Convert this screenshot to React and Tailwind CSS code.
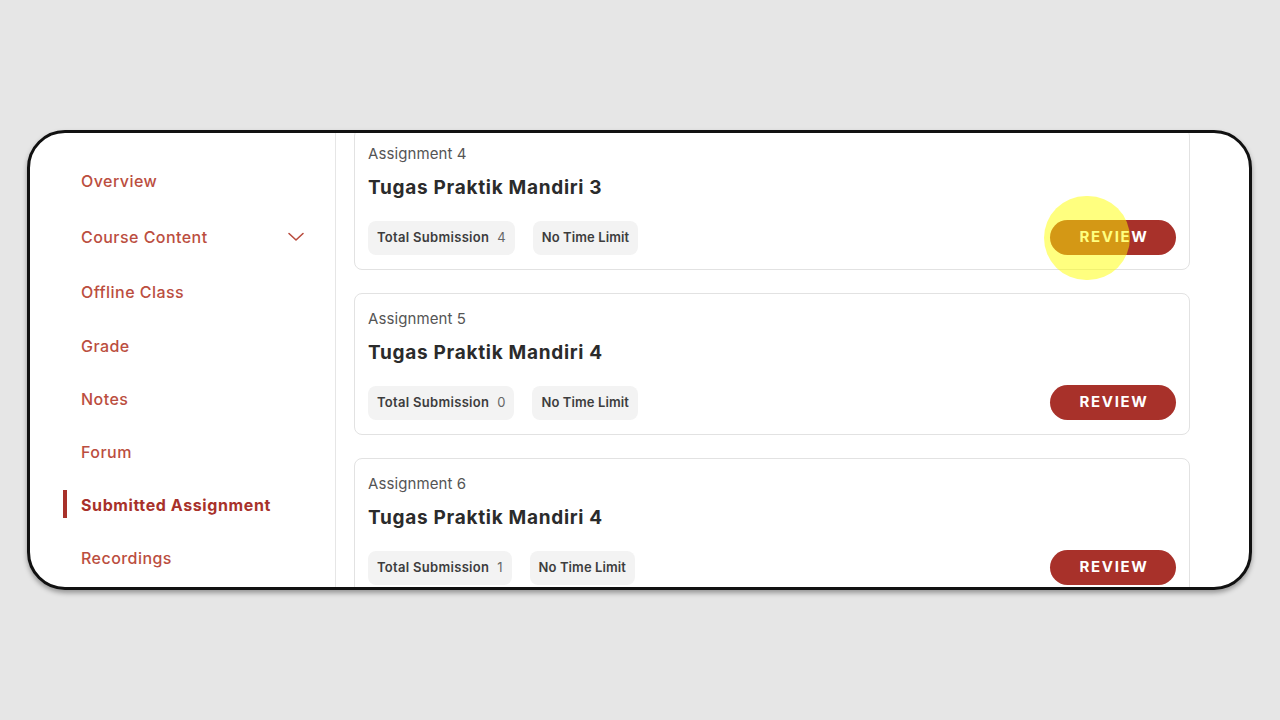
import React from "react";

const font = { fontFamily: "Inter, 'Noto Sans', sans-serif" };

const navItems = [
  { label: "Overview", h: "h-[56px]" },
  { label: "Course Content", h: "h-[56px]", chevron: true },
  { label: "Offline Class", h: "h-[54px]" },
  { label: "Grade", h: "h-[53px]" },
  { label: "Notes", h: "h-[53px]" },
  { label: "Forum", h: "h-[53px]" },
  { label: "Submitted Assignment", h: "h-[53px]", active: true },
  { label: "Recordings", h: "h-[53px]" },
];

const cards = [
  { n: 4, title: "Tugas Praktik Mandiri 3", total: 4, highlight: true },
  { n: 5, title: "Tugas Praktik Mandiri 4", total: 0 },
  { n: 6, title: "Tugas Praktik Mandiri 4", total: 1 },
];

function Card({ n, title, total, highlight }) {
  return (
    <div className="h-[142px] shrink-0 rounded-[8px] border border-[#e2e2e2] bg-white px-[13px] pt-[15px]">
      <div className="text-[15px] leading-[20px] tracking-[0.1px] text-[#555555]">Assignment {n}</div>
      <div className="mt-[10px] text-[19px] font-bold leading-[28px] tracking-[0.7px] text-[#2b2b2b]">
        {title}
      </div>
      <div className="mt-[18px] flex items-center">
        <div className="flex h-[34px] items-center rounded-[8px] bg-[#f3f3f3] px-[9px] text-[13px] text-[#3d3d3d]">
          <span className="font-semibold tracking-[0.3px]">Total Submission</span>
          <span className="ml-[8px] text-[#666666]">{total}</span>
        </div>
        <div className="ml-[18px] flex h-[34px] items-center rounded-[8px] bg-[#f3f3f3] px-[9px] text-[13px] font-semibold tracking-[0.1px] text-[#3d3d3d]">
          No Time Limit
        </div>
        <div className="relative ml-auto">
          <button className="flex h-[35px] w-[126px] items-center justify-center rounded-full bg-[#a8312a] pl-[2px] text-[15px] font-bold tracking-[1.7px] text-white">
            REVIEW
          </button>
          {highlight && (
            <div className="pointer-events-none absolute left-[-6px] top-[-24px] h-[84px] w-[86px] rounded-full bg-[rgba(255,255,0,0.5)]" />
          )}
        </div>
      </div>
    </div>
  );
}

export default function App() {
  return (
    <div className="h-[720px] w-[1280px] bg-[#e6e6e6] pl-[27px] pt-[130px]" style={font}>
      <div className="flex h-[460px] w-[1225px] overflow-hidden rounded-[38px] border-[3px] border-[#111111] bg-white shadow-[0_3px_5px_rgba(0,0,0,0.35)]">
        <div className="w-[306px] shrink-0 border-r border-[#e6e6e6] pt-[20px]">
          {navItems.map((it) => (
            <div key={it.label} className={`relative flex items-center ${it.h} pl-[51px] pr-[30px]`}>
              {it.active && <div className="absolute left-[33px] top-[12px] h-[28px] w-[4px] bg-[#a8312a]" />}
              <span
                className={
                  it.active
                    ? "text-[16px] font-bold tracking-[0.6px] text-[#a8312a]"
                    : "text-[16px] font-medium tracking-[0.45px] text-[#bb4e40]"
                }
              >
                {it.label}
              </span>
              {it.chevron && (
                <svg className="ml-auto" width="18" height="18" viewBox="0 0 18 18" fill="none">
                  <path d="M2 5.5 L9 12 L16 5.5" stroke="#b94c3e" strokeWidth="1.6" strokeLinecap="round" strokeLinejoin="round" />
                </svg>
              )}
            </div>
          ))}
        </div>
        <div className="flex-1 pl-[18px] pr-[59px]">
          <div className="mt-[-5px] flex flex-col gap-[23px]">
            {cards.map((c) => (
              <Card key={c.n} {...c} />
            ))}
          </div>
        </div>
      </div>
    </div>
  );
}
